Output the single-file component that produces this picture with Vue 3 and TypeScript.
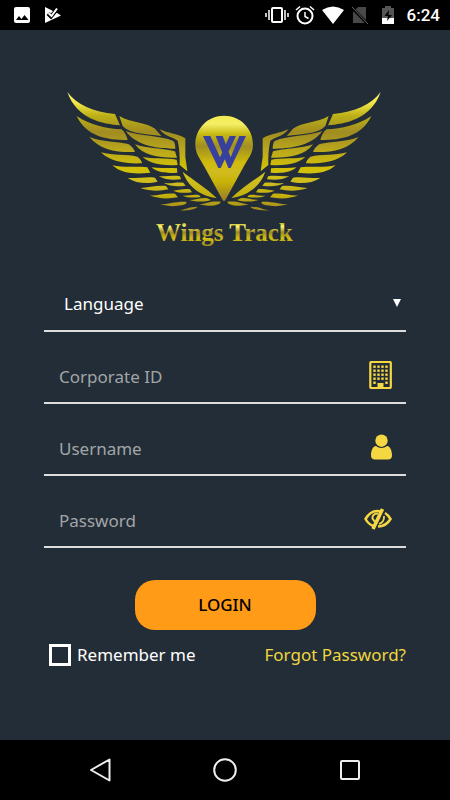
<script setup lang="ts">
import { ref } from 'vue'

const corporateId = ref('')
const username = ref('')
const password = ref('')
const remember = ref(false)
const language = ref('')

const feathers: string[] = [
  'M22 36C50 75 100 95 165 102L180 136C130 132 50 118 22 36Z',
  'M50 108C90 135 140 146 184 148C194 155 200 168 203 180C140 180 80 170 50 108Z',
  'M88 171C130 187 170 184 205 192C215 198 223 208 225 216C170 218 120 210 88 171Z',
  'M123 217C160 227 200 222 232 230C240 236 246 244 246 250C200 252 150 246 123 217Z',
  'M157 256C190 264 230 258 262 262L271 278C230 283 185 282 157 256Z',
  'M203 294C230 296 260 289 285 293L293 305C265 312 230 312 203 294Z',
  'M241 324C265 324 290 315 318 318L325 328C300 334 270 334 241 324Z',
  'M269 346C290 348 315 338 345 341L354 352C325 357 295 357 269 346Z',
  'M301 373C325 373 345 364 378 365C383 368 375 374 365 376C345 380 320 379 301 373Z',
  'M354 391C375 390 385 380 413 380C408 388 380 393 354 391Z',
  'M178 108C210 128 262 128 285 146L304 168C260 162 210 162 188 138Z',
  'M197 153C240 170 300 165 340 183Q346 190 346 206C300 206 230 200 197 153Z',
  'M225 193C260 206 310 205 345 214L351 233C300 234 250 228 225 193Z',
  'M248 231C275 237 320 233 350 239L353 255C315 257 275 255 248 231Z',
  'M274 262C300 266 330 262 351 265L352 278C325 280 295 280 274 262Z',
  'M296 288C320 290 340 285 360 289L363 298C340 301 315 300 296 288Z',
  'M312 309C335 311 350 305 370 308L377 317C355 320 330 320 312 309Z',
  'M340 332C355 332 370 325 390 328L396 337C375 340 355 339 340 332Z',
  'M367 347C385 348 400 342 418 346L422 351C400 354 380 353 367 347Z',
  'M388 360C405 360 420 353 440 354L453 360C435 366 410 366 388 360Z',
  'M418 373C440 371 450 362 482 365C483 372 465 378 445 377C435 377 428 375 418 373Z',
  'M299 148C325 160 350 160 376 175L376 230L382 274L359 255C360 230 358 205 353 182C335 170 312 168 299 148Z',
  'M368 275C400 300 440 325 470 354C430 350 385 325 368 275Z',
]

const windows = [0, 1, 2, 3].flatMap((row) =>
  [0, 1, 2, 3].map((col) => ({ x: 4.3 + col * 4, y: 4.5 + row * 4 })),
)
</script>

<template>
  <div class="screen">
    <header class="status">
      <div class="group">
        <svg width="18" height="18" viewBox="0 0 18 18" aria-hidden="true">
          <rect x="1" y="1" width="16" height="16" rx="2" fill="#fff" />
          <path d="M3 14l3-4 2.500 3 3-4 4 5z" fill="#000" />
        </svg>
        <svg width="18" height="18" viewBox="0 0 18 18" aria-hidden="true">
          <path d="M2 1v16L18 9.500 14 7z" fill="#fff" />
          <path d="M5 7.500l3 3L15 2" fill="none" stroke="#000" stroke-width="4" />
          <path d="M5.500 7l3 3 5.500-7.500" fill="none" stroke="#fff" stroke-width="2" />
        </svg>
      </div>
      <div class="group right">
        <svg width="24" height="20" viewBox="0 0 24 20" fill="none" stroke="#fff" stroke-width="2" aria-hidden="true">
          <rect x="7" y="3" width="10" height="14" rx="1" />
          <path d="M4 5v10M20 5v10M1 8v4M23 8v4" stroke-width="1.500" />
        </svg>
        <svg width="20" height="20" viewBox="0 0 20 20" fill="none" stroke="#fff" stroke-width="2" aria-hidden="true">
          <circle cx="10" cy="11" r="7.500" />
          <path d="M1 5l4-3.500M19 5l-4-3.500M10 7v4.500l3.500 2" stroke-width="1.500" />
        </svg>
        <svg width="24" height="20" viewBox="0 0 24 20" aria-hidden="true">
          <path d="M1 5Q12-2 23 5L12 19z" fill="#fff" />
        </svg>
        <svg width="18" height="20" viewBox="0 0 18 20" aria-hidden="true">
          <path d="M7 2h8v16H2V7z" fill="#484848" />
          <path d="M0 2l17 17" stroke="#000" stroke-width="3" />
          <path d="M1 2l16 17" stroke="#666" stroke-width="1" />
        </svg>
        <svg class="battery" width="14" height="20" viewBox="0 0 14 20" aria-hidden="true">
          <path d="M4 1h6v2h3v10H1V3h3z" fill="#555" />
          <path d="M1 13h12v6H1z" fill="#fff" />
          <path d="M8 5L3.500 11H7l-1 5 5-6H7.500z" fill="#000" />
        </svg>
        <time class="clock">6:24</time>
      </div>
    </header>

    <main>
      <svg class="logo" viewBox="0 0 984 510" role="img" aria-label="Wings Track">
        <defs>
          <linearGradient id="wingGold" gradientUnits="userSpaceOnUse" x1="0" y1="36" x2="0" y2="391">
            <stop offset="0" stop-color="#fffb78" />
            <stop offset=".1" stop-color="#eee345" />
            <stop offset=".2" stop-color="#bdb017" />
            <stop offset=".34" stop-color="#a08c21" />
            <stop offset=".5" stop-color="#bba91c" />
            <stop offset=".65" stop-color="#d3c005" />
            <stop offset=".76" stop-color="#cfbd20" />
            <stop offset=".88" stop-color="#c3b00b" />
            <stop offset="1" stop-color="#a08a22" />
          </linearGradient>
          <linearGradient id="gold" x1="0" y1="0" x2="0" y2="1">
            <stop offset="0" stop-color="#f1ea50" />
            <stop offset=".1" stop-color="#f5ee65" />
            <stop offset=".22" stop-color="#c7b913" />
            <stop offset=".36" stop-color="#a08e22" />
            <stop offset=".55" stop-color="#cfbb0b" />
            <stop offset=".66" stop-color="#d0bc20" />
            <stop offset=".78" stop-color="#c8b307" />
            <stop offset="1" stop-color="#957b2b" />
          </linearGradient>
          <linearGradient id="titleGold" gradientUnits="userSpaceOnUse" x1="0" y1="428" x2="0" y2="500">
            <stop offset="0" stop-color="#b9aa16" />
            <stop offset=".15" stop-color="#fff974" />
            <stop offset=".4" stop-color="#9e8a22" />
            <stop offset=".65" stop-color="#d2be12" />
            <stop offset="1" stop-color="#a08922" />
          </linearGradient>
          <g id="wing">
            <path v-for="(d, i) in feathers" :key="i" :d="d" />
          </g>
        </defs>
        <g fill="url(#wingGold)">
          <use href="#wing" />
          <use href="#wing" transform="matrix(-1 0 0 1 984 0)" />
        </g>
        <path
          d="M492 107C443 107 406 145 406 194C406 220 419 234 432 258L489 362H495L552 258C565 234 579 220 579 194C579 145 541 107 492 107Z"
          fill="url(#gold)"
        />
        <path
          d="M429 168H451L480 232L509 168H528L482 264H475ZM467 168H488L512 232L538 168H558L512 264H505Z"
          fill="#37409c"
        />
        <text x="493" y="482" text-anchor="middle" class="brand" fill="url(#titleGold)">Wings Track</text>
      </svg>

      <form @submit.prevent>
        <div class="field">
          <select v-model="language" aria-label="Language">
            <option value="">Language</option>
            <option value="en">English</option>
          </select>
          <svg class="arrow" width="8" height="8" viewBox="0 0 8 8" aria-hidden="true">
            <path d="M0 0h8L4 8z" fill="#fff" />
          </svg>
        </div>
        <div class="field">
          <input v-model="corporateId" type="text" placeholder="Corporate ID" aria-label="Corporate ID" />
          <svg width="23" height="28" viewBox="0 0 23 28" fill="#f5d742" aria-hidden="true">
            <rect x="1.300" y="1" width="20.500" height="26" rx="1" fill="none" stroke="#f5d742" stroke-width="2.200" />
            <rect v-for="(w, i) in windows" :key="i" :x="w.x" :y="w.y" width="2.400" height="2.400" />
            <path d="M4.300 20.500h2.400v2.400H4.300zM16.300 20.500h2.400v2.400h-2.400zM8.500 22h6v5h-6z" />
          </svg>
        </div>
        <div class="field">
          <input v-model="username" type="text" placeholder="Username" aria-label="Username" />
          <svg width="21" height="26" viewBox="0 0 21 26" fill="#f5d742" aria-hidden="true">
            <circle cx="10.500" cy="6.700" r="6.200" />
            <path d="M5 12C1.500 12.500 0 17 0 21.500C0 24 1.500 25.500 4 25.500H17C19.500 25.500 21 24 21 21.500C21 17 19.500 12.500 16 12C13 14.500 8 14.500 5 12Z" />
          </svg>
        </div>
        <div class="field">
          <input v-model="password" type="password" placeholder="Password" aria-label="Password" />
          <svg width="28" height="22" viewBox="0 0 28 22" fill="none" stroke="#f5d742" aria-hidden="true">
            <path d="M17 3.500C10 1.500 5 5 1.500 11C3.500 14.500 6 17 9.500 18" stroke-width="2.500" />
            <path d="M21 5C23.500 6.500 25 8.500 26.500 11C23.500 16 19.500 18.500 14 18.500" stroke-width="2.500" />
            <path d="M14 5.500C9.500 5.500 8 8 8.500 10.500L11 14" stroke-width="2" />
            <path d="M20 8C20.500 12 18 15 15 16" stroke-width="1.800" />
            <path d="M18.500 1L9 21" stroke-width="3.600" />
          </svg>
        </div>

        <button type="submit" class="login">LOGIN</button>

        <div class="options">
          <label class="remember">
            <input v-model="remember" type="checkbox" />
            <span>Remember me</span>
          </label>
          <a href="#">Forgot Password?</a>
        </div>
      </form>
    </main>

    <nav class="keys" aria-label="System navigation">
      <button type="button" aria-label="Back">
        <svg width="24" height="26" viewBox="0 0 24 26"><path d="M21.500 2.500v21L3 13z" /></svg>
      </button>
      <button type="button" aria-label="Home">
        <svg width="24" height="26" viewBox="0 0 24 26"><circle cx="12" cy="13" r="10.800" /></svg>
      </button>
      <button type="button" aria-label="Recent apps">
        <svg width="24" height="26" viewBox="0 0 24 26"><rect x="3" y="4" width="18" height="18" rx="1" /></svg>
      </button>
    </nav>
  </div>
</template>

<style>
body {
  margin: 0;
  background: #232d37;
}
</style>

<style scoped>
.screen {
  min-height: 100vh;
  display: flex;
  flex-direction: column;
  background: #232d37;
  color: #fff;
  font-family: "Noto Sans", "Open Sans", sans-serif;
  font-size: 17px;
  line-height: 24px;
}
.status {
  height: 30px;
  box-sizing: border-box;
  padding: 0 10px 0 13px;
  display: flex;
  align-items: center;
  justify-content: space-between;
  background: #000;
}
.group {
  display: flex;
  align-items: center;
  gap: 12px;
}
.right {
  gap: 6px;
}
.battery {
  margin-left: 6px;
}
.clock {
  margin-left: 6px;
  font-family: Roboto, sans-serif;
  font-weight: 500;
}
main {
  flex: 1;
  padding: 50px 44px 0;
}
.logo {
  display: block;
  width: 328px;
  max-width: 100%;
  margin: 0 auto;
  padding-right: 2px;
}
.brand {
  font-family: "Liberation Serif", serif;
  font-size: 75px;
  font-weight: 700;
}
form {
  margin-top: 26px;
  display: flex;
  flex-direction: column;
}
.field {
  height: 56px;
  box-sizing: border-box;
  margin-bottom: 16px;
  padding-right: 14px;
  display: flex;
  align-items: center;
  border-bottom: 2px solid #ddd;
}
.field input,
.field select {
  flex: 1;
  min-width: 0;
  height: 100%;
  box-sizing: border-box;
  padding: 2px 0 0 15px;
  border: 0;
  outline: 0;
  background: transparent;
  color: #fff;
  font: inherit;
}
.field select {
  appearance: none;
  padding-left: 20px;
}
.field option {
  color: #000;
}
.field input::placeholder {
  color: #a2a5a8;
  opacity: 1;
}
.arrow {
  margin-right: -9px;
}
.login {
  align-self: center;
  width: 50%;
  height: 50px;
  margin-top: 16px;
  border: 0;
  border-radius: 20px;
  background: #ff9b17;
  color: #000;
  font: inherit;
  font-weight: 500;
}
.options {
  margin-top: 13px;
  display: flex;
  align-items: center;
  justify-content: space-between;
}
.remember {
  display: flex;
  align-items: center;
  gap: 6px;
}
.remember input {
  appearance: none;
  box-sizing: border-box;
  width: 22px;
  height: 22px;
  margin: 0 0 0 5px;
  border: 3px solid #fff;
}
.remember input:checked {
  background: #f5d742;
}
.options a {
  color: #f0d640;
  text-decoration: none;
}
.keys {
  height: 60px;
  display: flex;
  align-items: center;
  justify-content: center;
  gap: 101px;
  background: #000;
}
.keys button {
  display: flex;
  padding: 0;
  border: 0;
  background: none;
}
.keys path,
.keys circle,
.keys rect {
  fill: none;
  stroke: #eee;
  stroke-width: 2;
  stroke-linejoin: round;
}
</style>
